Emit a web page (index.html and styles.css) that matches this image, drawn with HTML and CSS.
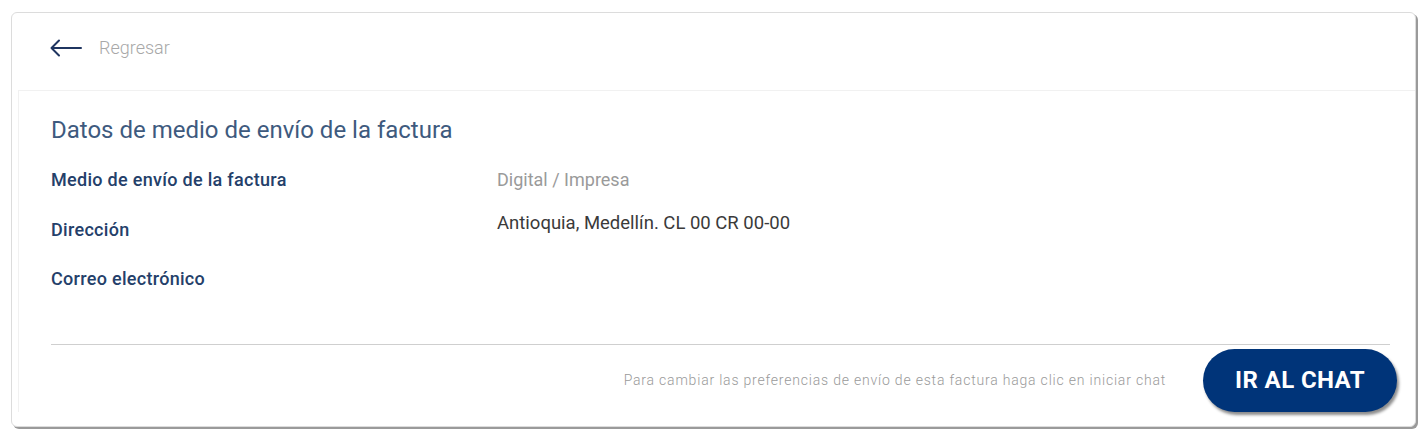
FILE: index.html
```html
<!DOCTYPE html>
<html lang="es">
<head>
    <meta charset="UTF-8">
    <meta name="viewport" content="width=device-width, initial-scale=1.0">
    <title>Datos de medio de envío de la factura</title>
    <link rel="stylesheet" href="styles.css">
</head>
<body>
    <div class="card">
        <div class="top-bar">
            <a href="#" class="back">
                <svg width="32" height="18" viewBox="0 0 32 18" fill="none" stroke="#1f3560" stroke-width="2" stroke-linecap="round" stroke-linejoin="round">
                    <path d="M31 9H2"/>
                    <path d="M9 1.5L1.5 9L9 16.5"/>
                </svg>
                <span>Regresar</span>
            </a>
        </div>

        <div class="section">
            <h2>Datos de medio de envío de la factura</h2>

            <div class="row">
                <div class="label">Medio de envío de la factura</div>
                <div class="value muted">Digital / Impresa</div>
            </div>
            <div class="row">
                <div class="label">Dirección</div>
                <div class="value">Antioquia, Medellín. CL 00 CR 00-00</div>
            </div>
            <div class="row">
                <div class="label">Correo electrónico</div>
                <div class="value"></div>
            </div>

            <div class="footer">
                <p>Para cambiar las preferencias de envío de esta factura haga clic en iniciar chat</p>
                <button type="button">IR AL CHAT</button>
            </div>
        </div>
    </div>
</body>
</html>
```

FILE: styles.css
```css
body {
    margin: 0;
    padding: 12px 11px 11px 11px;
    font-family: Roboto, "Liberation Sans", sans-serif;
    background: #fff;
}
.card {
    background: #fff;
    border: 1px solid #dcdcdc;
    border-radius: 6px;
    box-shadow: 2px 2px 0 #9a9a9a;
    height: 415px;
    box-sizing: border-box;
    overflow: hidden;
}
.top-bar {
    height: 77px;
    display: flex;
    align-items: center;
    padding-left: 38px;
    padding-bottom: 8px;
    box-sizing: border-box;
}
.back {
    display: flex;
    align-items: center;
    gap: 17px;
    text-decoration: none;
    color: #a8a8a8;
    font-size: 18px;
    font-weight: 300;
}
.section {
    margin-left: 6px;
    border-top: 1px solid #f1f1f1;
    border-left: 1px solid #f1f1f1;
    padding: 25px 25px 0 32px;
}
h2 {
    margin: 0 0 11px 0;
    font-size: 24px;
    font-weight: 400;
    color: #3e5a7e;
    line-height: 28px;
}
.row {
    display: flex;
    align-items: center;
    height: 49.5px;
}
.label {
    width: 446px;
    font-size: 18px;
    letter-spacing: 0.3px;
    font-weight: 500;
    color: #24406a;
}
.value {
    font-size: 18.5px;
    color: #3a3a3a;
    margin-top: -12px;
}
.value.muted {
    font-size: 18px;
    color: #9a9a9a;
    margin-top: 0;
}
.footer {
    margin-top: 40px;
    border-top: 1px solid #cfcfcf;
    display: flex;
    justify-content: flex-end;
    align-items: center;
    gap: 37px;
    padding-top: 4px;
}
.footer p {
    margin: 0;
    font-size: 14px;
    letter-spacing: 0.8px;
    font-weight: 300;
    color: #9a9a9a;
}
button {
    width: 194px;
    height: 63px;
    margin-right: -7px;
    border: none;
    border-radius: 32px;
    background: #003479;
    color: #fff;
    font-family: Roboto, "Liberation Sans", sans-serif;
    font-size: 24px;
    letter-spacing: 0.4px;
    font-weight: 700;
    box-shadow: 2px 3px 3px rgba(0, 0, 0, 0.45);
    cursor: pointer;
}
```
